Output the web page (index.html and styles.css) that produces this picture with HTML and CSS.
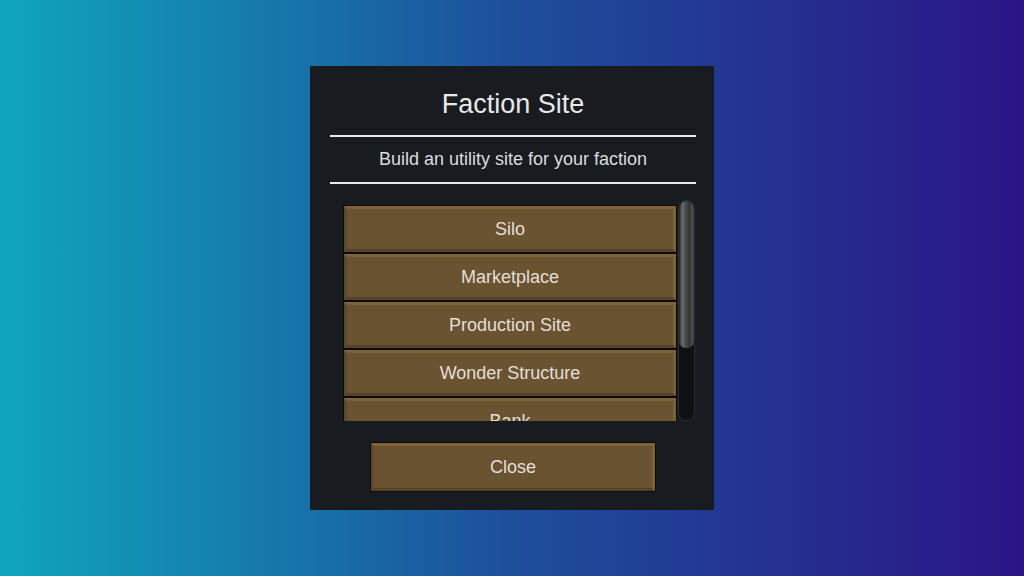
FILE: index.html
```html
<!DOCTYPE html>
<html>
<head>
  <title>Faction Site</title>
  <link rel="stylesheet" href="styles.css">
</head>
<body>
  <div class="dialog">
    <h1 class="dialog-title">Faction Site</h1>
    <hr class="rule">
    <p class="dialog-text">Build an utility site for your faction</p>
    <hr class="rule rule-lower">

    <div class="scroll-row">
      <div class="site-list">
        <button class="wood-btn">Silo</button>
        <button class="wood-btn">Marketplace</button>
        <button class="wood-btn">Production Site</button>
        <button class="wood-btn">Wonder Structure</button>
        <button class="wood-btn">Bank</button>
      </div>
      <div class="scrollbar">
        <div class="scroll-thumb"></div>
      </div>
    </div>

    <button class="wood-btn close-btn">Close</button>
  </div>
</body>
</html>
```

FILE: styles.css
```css
html, body {
  height: 100%;
}

body {
  margin: 0;
  display: flex;
  align-items: center;
  justify-content: center;
  background: linear-gradient(90deg, #0fa6bd 0%, #1d4f9b 50%, #2b1586 100%);
  font-family: "Liberation Sans", Arial, sans-serif;
}

.dialog {
  width: 404px;
  height: 444px;
  box-sizing: border-box;
  padding: 22px 18px 19px 20px;
  background: #181b20;
  display: flex;
  flex-direction: column;
}

.dialog-title {
  margin: 0;
  font-size: 27px;
  font-weight: normal;
  line-height: 32px;
  text-align: center;
  color: #e8e8e8;
}

.rule {
  margin: 15px 0 0;
  border: 0;
  height: 2px;
  background: #e9e9e9;
}

.rule-lower {
  margin-top: 13px;
}

.dialog-text {
  margin: 12px 0 0;
  font-size: 18px;
  line-height: 20px;
  text-align: center;
  color: #dcdcdc;
}

/* list of buildable sites with its scroll track */
.scroll-row {
  display: flex;
  align-items: flex-start;
  gap: 1px;
  margin: 16px 1px 0 13px;
}

.site-list {
  width: 334px;
  height: 216px;
  margin-top: 5px;
  padding: 1px;
  box-sizing: border-box;
  overflow: hidden;
  display: flex;
  flex-direction: column;
  gap: 2px;
}

.wood-btn {
  flex: none;
  height: 46px;
  width: 100%;
  box-sizing: border-box;
  border: 3px solid;
  border-color: #7d6337 #7b6236 #54422a #5c492b;
  box-shadow: 0 0 0 1px #0b0a08;
  background: #6a5331;
  color: #e4dfd6;
  font-family: "Liberation Sans", Arial, sans-serif;
  font-size: 18px;
  padding: 0;
  cursor: pointer;
}

.scrollbar {
  width: 17px;
  height: 221px;
  box-sizing: border-box;
  border: 1px solid #2a2d32;
  border-radius: 8px;
  background: #0e1013;
  overflow: hidden;
}

.scroll-thumb {
  height: 147px;
  border-radius: 8px 8px 7px 7px;
  background: linear-gradient(90deg, #202022 0%, #6b6b6b 22%, #4b4b4c 45%, #333335 70%, #505052 90%, #2a2a2b 100%);
}

.close-btn {
  width: 284px;
  height: 48px;
  margin: 22px auto 0 41px;
}
```
